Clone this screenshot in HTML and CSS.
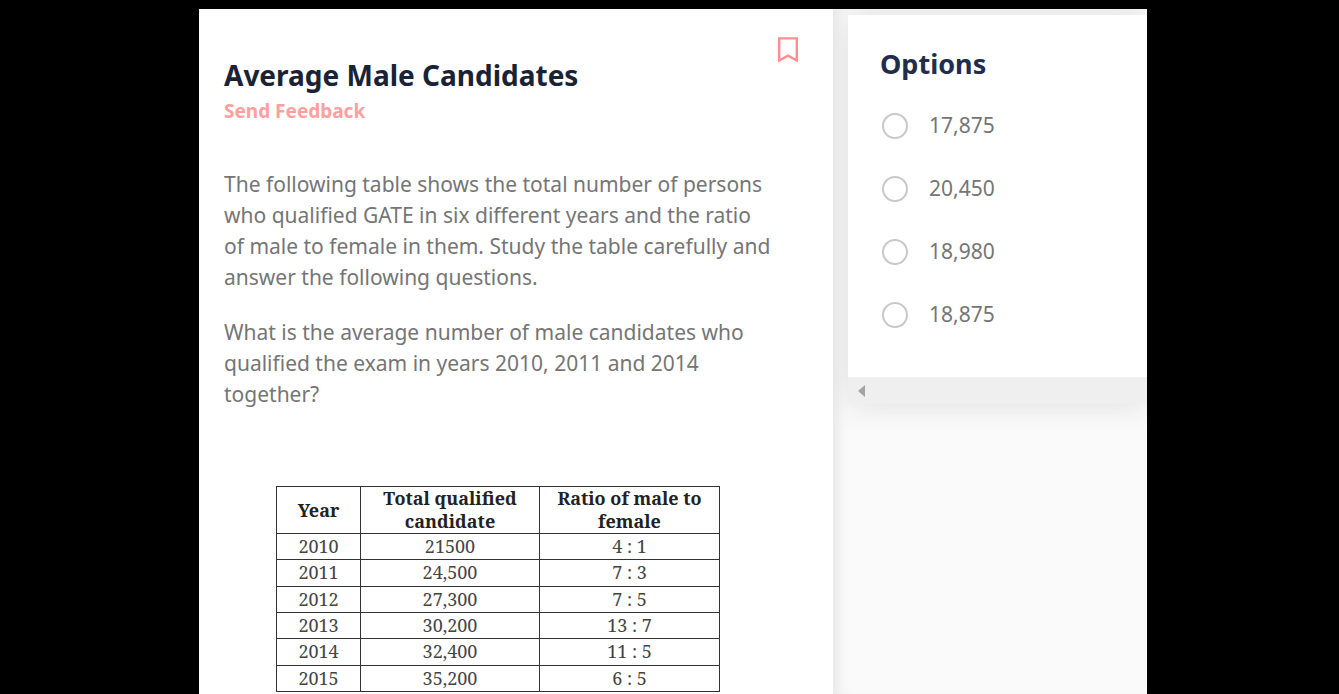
FILE: index.html
```html
<!DOCTYPE html>
<html lang="en">
<head>
<meta charset="utf-8">
<meta name="viewport" content="width=device-width, initial-scale=1">
<title>Average Male Candidates</title>
<link rel="stylesheet" href="styles.css">
</head>
<body>
<div class="page">
  <main class="problem">
    <header class="problem-header">
      <div class="problem-heading">
        <h1 class="title">Average Male Candidates</h1>
        <a class="feedback" href="#">Send Feedback</a>
      </div>
      <button class="bookmark" type="button" aria-label="Bookmark">
        <svg width="20" height="26" viewBox="0 0 20 26" fill="none" stroke="#ff8f8f" stroke-width="2.4"><path d="M1.2 1.4H18.8V23.5L10 18.6L1.2 23.5Z"/></svg>
      </button>
    </header>
    <div class="statement">
      <p>The following table shows the total number of persons who qualified GATE in six different years and the ratio of male to female in them. Study the table carefully and answer the following questions.</p>
      <p>What is the average number of male candidates who qualified the exam in years 2010, 2011 and 2014 together?</p>
    </div>
    <table class="data">
      <colgroup><col class="col-year"><col class="col-total"><col class="col-ratio"></colgroup>
      <thead>
        <tr><th scope="col">Year</th><th scope="col">Total qualified<br>candidate</th><th scope="col">Ratio of male to<br>female</th></tr>
      </thead>
      <tbody>
        <tr><td>2010</td><td>21500</td><td>4 : 1</td></tr>
        <tr><td>2011</td><td>24,500</td><td>7 : 3</td></tr>
        <tr><td>2012</td><td>27,300</td><td>7 : 5</td></tr>
        <tr><td>2013</td><td>30,200</td><td>13 : 7</td></tr>
        <tr><td>2014</td><td>32,400</td><td>11 : 5</td></tr>
        <tr><td>2015</td><td>35,200</td><td>6 : 5</td></tr>
      </tbody>
    </table>
  </main>
  <aside class="side">
    <div class="card">
      <form class="options">
        <h2 class="options-title">Options</h2>
        <label class="option"><input type="radio" name="answer"><span>17,875</span></label>
        <label class="option"><input type="radio" name="answer"><span>20,450</span></label>
        <label class="option"><input type="radio" name="answer"><span>18,980</span></label>
        <label class="option"><input type="radio" name="answer"><span>18,875</span></label>
      </form>
      <div class="scroller">
        <button class="scroll-left" type="button" aria-label="Scroll left">
          <svg width="7" height="12" viewBox="0 0 7 12" fill="#a3a3a3"><path d="M7 0V12L0 6Z"/></svg>
        </button>
      </div>
    </div>
  </aside>
</div>
</body>
</html>
```
FILE: styles.css
```css
* { box-sizing: border-box; }

body {
  margin: 0;
  height: 100vh;
  overflow: hidden;
  background: #000;
  color: #757575;
  font: 21px/31px "Noto Sans", sans-serif;
}

h1, h2, p { margin: 0; }

button {
  display: flex;
  padding: 0;
  border: 0;
  background: none;
}

.page {
  display: grid;
  grid-template-columns: minmax(0, 634fr) minmax(0, 314fr);
  height: 100%;
  padding: 9px 192px 0 199px;
}

.problem {
  padding: 28px 35px 0 25px;
  background: #fff;
}

.problem-header {
  display: flex;
  justify-content: space-between;
  align-items: flex-start;
}

.problem-heading { padding-top: 20px; }

.title {
  color: #1a2236;
  font: 700 28px/36px "Noto Sans", sans-serif;
}

.feedback {
  display: block;
  color: #ff9f9f;
  font: 700 19px/36px "Noto Sans", sans-serif;
  text-decoration: none;
}

.statement {
  display: grid;
  gap: 24px;
  padding: 40px 24px 0 0;
}

.data {
  width: 444px;
  height: 206px;
  margin: 76px 0 0 52px;
  border-collapse: collapse;
  table-layout: fixed;
  color: #444;
  font: 18px/25px "Noto Serif", "Liberation Serif", serif;
  text-align: center;
}

.col-year { width: 84px; }
.col-total { width: 179px; }

.data th,
.data td {
  padding: 0;
  border: 1px solid #333;
}

.data th {
  color: #222;
  line-height: 23px;
}

.side {
  overflow: hidden;
  padding: 6px 0 0 15px;
  background: #fafafa;
  box-shadow: inset 12px 0 14px -8px #e4e4e4;
}

.card { box-shadow: 0 0 30px #dedede; }

.options {
  display: grid;
  padding: 28px 32px 31px;
  background: #fff;
}

.options-title {
  padding-bottom: 9px;
  color: #222d4e;
  font: 700 27px/42px "Noto Sans", sans-serif;
}

.option {
  display: flex;
  align-items: center;
  gap: 21px;
  height: 63px;
}

.option input {
  appearance: none;
  width: 26px;
  height: 26px;
  margin: 0 0 0 2px;
  border: 2px solid #c8c8c8;
  border-radius: 50%;
}

.scroller {
  display: flex;
  align-items: center;
  height: 27px;
  padding-left: 10px;
  background: #efefef;
}
```
